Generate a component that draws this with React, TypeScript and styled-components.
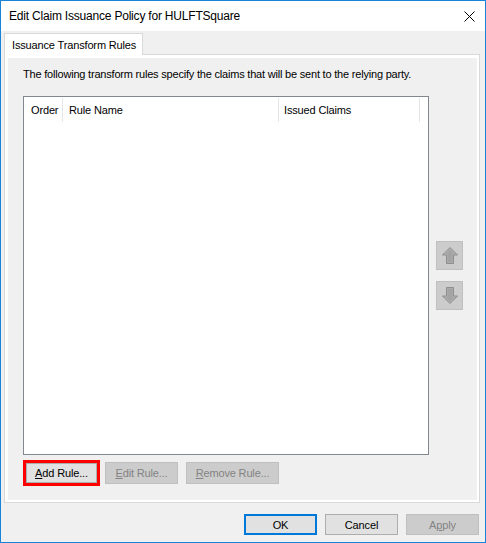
import React from "react";
import styled, { createGlobalStyle } from "styled-components";

const Global = createGlobalStyle`
  html, body { margin: 0; padding: 0; background: #f0f0f0; }
  body { font-family: "Liberation Sans", Arial, sans-serif; font-size: 11px; color: #000; }
  * { box-sizing: border-box; }
`;

const Window = styled.div`
  width: 486px;
  height: 543px;
  border: 1px solid #1883d7;
  display: flex;
  flex-direction: column;
  background: #f0f0f0;
  font-family: "Liberation Sans", Arial, sans-serif;
  font-size: 11px;
  letter-spacing: -0.15px;
`;

const TitleBar = styled.div`
  height: 30px;
  background: #fff;
  display: flex;
  align-items: center;
  padding-left: 8px;
  font-size: 12px;
  letter-spacing: -0.2px;
`;

const Title = styled.span`
  flex: 1;
`;

const Close = styled.svg`
  width: 11px;
  height: 11px;
  margin-right: 10px;
`;

const Body = styled.div`
  flex: 1;
  display: flex;
  flex-direction: column;
  padding: 2px 5px 0 3px;
`;

const Tab = styled.div`
  align-self: flex-start;
  position: relative;
  z-index: 1;
  height: 22px;
  width: 139px;
  margin-bottom: -1px;
  border: 1px solid #d9d9d9;
  border-bottom: none;
  background: #fff;
  padding-left: 7px;
  display: flex;
  align-items: center;
`;

const Panel = styled.div`
  flex: 1;
  display: flex;
  border: 1px solid #d9d9d9;
  background: #fff;
  padding: 3px 2px 2px 3px;
`;

const Page = styled.div`
  flex: 1;
  background: #f0f0f0;
  display: flex;
  flex-direction: column;
  padding: 9px 0 0 15px;
`;

const Description = styled.div`
  line-height: 15px;
  height: 15px;
  letter-spacing: -0.2px;
`;

const ListRow = styled.div`
  display: flex;
  align-items: center;
  margin-top: 14px;
`;

const ListBox = styled.div`
  width: 406px;
  height: 359px;
  border: 1px solid #828790;
  background: #fff;
`;

const Header = styled.div`
  display: flex;
  height: 26px;
  padding-top: 1px;
`;

const Column = styled.div<{ $w: number; $pad: number }>`
  width: ${(p) => p.$w}px;
  height: 24px;
  border-right: 1px solid #e5e5e5;
  padding-left: ${(p) => p.$pad}px;
  display: flex;
  align-items: center;
`;

const ArrowColumn = styled.div`
  display: flex;
  flex-direction: column;
  gap: 11px;
  margin-left: 7px;
  margin-top: -1px;
`;

const ArrowButton = styled.div`
  width: 27px;
  height: 29px;
  background: #cccccc;
  border: 1px solid #bfbfbf;
  display: flex;
  align-items: center;
  justify-content: center;
`;

const ButtonRow = styled.div`
  display: flex;
  align-items: center;
  margin-top: 5px;
`;

const RedFrame = styled.div`
  border: 3px solid #ff0000;
  display: flex;
`;

const Button = styled.div<{ $w: number; $h?: number; $disabled?: boolean; $default?: boolean; $gap?: number }>`
  width: ${(p) => p.$w}px;
  height: ${(p) => p.$h ?? 22}px;
  margin-left: ${(p) => p.$gap ?? 0}px;
  background: ${(p) => (p.$disabled ? "#cccccc" : "#e1e1e1")};
  border: ${(p) =>
    p.$default ? "2px solid #0078d7" : p.$disabled ? "1px solid #bfbfbf" : "1px solid #adadad"};
  color: ${(p) => (p.$disabled ? "#838383" : "#000")};
  display: flex;
  align-items: center;
  justify-content: center;
  u { text-decoration: underline; text-underline-offset: 1px; }
`;

const Footer = styled.div`
  height: 39px;
  display: flex;
  justify-content: flex-end;
  align-items: flex-start;
  gap: 8px;
  padding-top: 11px;
  padding-right: 1px;
`;

const ArrowSvg = styled.svg<{ $down?: boolean }>`
  transform: ${(p) => (p.$down ? "rotate(180deg)" : "none")};
`;

const Arrow = ({ down }: { down?: boolean }) => (
  <ArrowSvg $down={down} width="16" height="17" viewBox="0 0 16 17">
    <polygon
      points="8,0.5 15.5,8 11.5,8 11.5,16.5 4.5,16.5 4.5,8 0.5,8"
      fill="#b0b0b0"
      stroke="#8e8e8e"
      strokeWidth="1"
    />
    <polygon points="8,2.5 12.5,7 10.5,7 10.5,15.5 5.5,15.5 5.5,7 3.5,7" fill="#a4a4a4" />
  </ArrowSvg>
);

export default function App() {
  return (
    <>
      <Global />
      <Window>
        <TitleBar>
          <Title>Edit Claim Issuance Policy for HULFTSquare</Title>
          <Close viewBox="0 0 11 11">
            <path d="M0.5 0.5 L10.5 10.5 M10.5 0.5 L0.5 10.5" stroke="#000" strokeWidth="1" fill="none" />
          </Close>
        </TitleBar>
        <Body>
          <Tab>Issuance Transform Rules</Tab>
          <Panel>
            <Page>
              <Description>
                The following transform rules specify the claims that will be sent to the relying party.
              </Description>
              <ListRow>
                <ListBox>
                  <Header>
                    <Column $w={39} $pad={7}>Order</Column>
                    <Column $w={216} $pad={6}>Rule Name</Column>
                    <Column $w={141} $pad={5}>Issued Claims</Column>
                  </Header>
                </ListBox>
                <ArrowColumn>
                  <ArrowButton>
                    <Arrow />
                  </ArrowButton>
                  <ArrowButton>
                    <Arrow down />
                  </ArrowButton>
                </ArrowColumn>
              </ListRow>
              <ButtonRow>
                <RedFrame>
                  <Button $w={71} $h={20}>
                    <span><u>A</u>dd Rule...</span>
                  </Button>
                </RedFrame>
                <Button $w={73} $disabled $gap={5}>
                  <span><u>E</u>dit Rule...</span>
                </Button>
                <Button $w={93} $disabled $gap={8}>
                  <span><u>R</u>emove Rule...</span>
                </Button>
              </ButtonRow>
            </Page>
          </Panel>
          <Footer>
            <Button $w={73} $h={21} $default>OK</Button>
            <Button $w={73} $h={21}>Cancel</Button>
            <Button $w={73} $h={21} $disabled>A<u>p</u>ply</Button>
          </Footer>
        </Body>
      </Window>
    </>
  );
}
